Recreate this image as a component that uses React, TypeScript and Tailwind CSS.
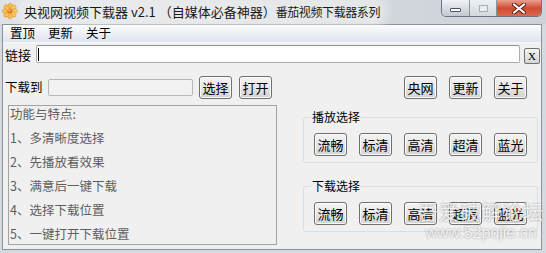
import type { ReactNode } from 'react'

function Flower() {
  const petals = [0, 45, 90, 135, 180, 225, 270, 315]
  return (
    <svg width="16" height="16" viewBox="0 0 16 16">
      {petals.map((a) => (
        <ellipse
          key={a}
          cx="8"
          cy="3.6"
          rx="2.2"
          ry="3.4"
          transform={`rotate(${a} 8 8)`}
          fill="#f6c54a"
          stroke="#d98a2e"
          strokeWidth="0.6"
        />
      ))}
      <circle cx="8" cy="8" r="2.6" fill="#e7782c" />
      <circle cx="7.4" cy="7.3" r="0.9" fill="#ffd9a0" />
    </svg>
  )
}

function Btn({ children }: { children: ReactNode }) {
  return (
    <div className="flex h-[23px] w-[33px] shrink-0 items-center justify-center rounded-[3px] border border-[#707070] bg-gradient-to-b from-[#f4f4f4] via-[#e6e6e6] to-[#d2d2d2] text-[13px] leading-none shadow-[inset_0_0_0_1px_#fbfbfb]">
      {children}
    </div>
  )
}

function Group({ title, className }: { title: string; className: string }) {
  return (
    <fieldset className={`rounded-[3px] border border-[#d5dfe5] px-[10px] pb-[6px] pt-[9px] ${className}`}>
      <legend className="-ml-[3px] px-[1px] text-[12px] leading-[14px]">{title}</legend>
      <div className="flex gap-[12px]">
        <Btn>流畅</Btn>
        <Btn>标清</Btn>
        <Btn>高清</Btn>
        <Btn>超清</Btn>
        <Btn>蓝光</Btn>
      </div>
    </fieldset>
  )
}

const features = ['1、多清晰度选择', '2、先播放看效果', '3、满意后一键下载', '4、选择下载位置', '5、一键打开下载位置']

export default function App() {
  return (
    <div className="relative h-[253px] w-[546px] overflow-hidden bg-[#d5dae0] font-['Noto_Sans_CJK_SC',sans-serif] text-black">
      {/* title bar */}
      <div className="flex h-[24px] items-start bg-gradient-to-r from-[#dfe3e8] to-[#cdd2d8]">
        <div className="ml-[2px] mt-[3px] h-[16px] w-[16px]">
          <Flower />
        </div>
        <div className="ml-[6px] mt-[2px] whitespace-pre rounded-[6px] bg-[#eeeeee]/70 text-[13px] leading-[19px] text-[#1a1a1a] shadow-[0_0_10px_6px_rgba(240,240,240,0.7)]">
          <span>央视网视频下载器 v2.1 （自媒体必备神器）</span>
          <span className="text-[12px] tracking-[-0.4px]">番茄视频下载器系列</span>
        </div>
        <div className="ml-auto mr-[4px] flex h-[17px] overflow-hidden rounded-b-[5px] border border-t-0 border-[#6b7482]">
          <div className="flex w-[28px] items-center justify-center border-r border-[#8a929e] bg-gradient-to-b from-[#f0f2f5] to-[#c3c9d2]">
            <div className="mt-[3px] h-[4px] w-[11px] rounded-[1px] border border-[#4b5360] bg-white" />
          </div>
          <div className="flex w-[27px] items-center justify-center border-r border-[#8a929e] bg-gradient-to-b from-[#eef0f3] to-[#d3d8de]">
            <div className="h-[7px] w-[9px] border border-[#a6adb7] bg-[#e9ecef]" />
          </div>
          <div className="flex w-[44px] items-center justify-center bg-gradient-to-b from-[#e9a08e] via-[#cf4b33] to-[#d96a4f]">
            <svg width="14" height="11" viewBox="0 0 14 11">
              <path d="M2 1.5 L12 9.5 M12 1.5 L2 9.5" stroke="#5a1c12" strokeWidth="4" strokeLinecap="round" />
              <path d="M2 1.5 L12 9.5 M12 1.5 L2 9.5" stroke="#ffffff" strokeWidth="2.2" strokeLinecap="round" />
            </svg>
          </div>
        </div>
      </div>

      {/* client area */}
      <div className="ml-[2px] flex h-[226px] w-[540px] flex-col border border-[#8b929b] bg-[#f0f0f0]">
        {/* menu bar */}
        <div className="flex h-[18px] items-center gap-[13px] border-b border-[#f5f7fa] bg-gradient-to-b from-[#fbfcfd] to-[#dde4ee] pl-[7px] text-[12.5px] leading-none">
          <span>置顶</span>
          <span>更新</span>
          <span>关于</span>
        </div>

        {/* link row */}
        <div className="mt-[2px] flex h-[18px] items-center">
          <span className="w-[33px] pl-[2px] text-[13px] leading-none">链接</span>
          <div className="flex h-[18px] w-[484px] items-center rounded-[2px] border border-[#abadb3] border-t-[#8e9196] bg-white pl-[1px]">
            <div className="h-[13px] w-[1px] bg-black" />
          </div>
          <div className="ml-[4px] mt-[4px] flex h-[16px] w-[16px] items-center justify-center rounded-[2px] border border-[#707070] bg-gradient-to-b from-[#f4f4f4] to-[#d6d6d6] font-['Liberation_Serif',serif] text-[11px] leading-none">
            X
          </div>
        </div>

        {/* main */}
        <div className="mt-[13px] flex">
          <div className="w-[277px]">
            <div className="flex h-[23px] items-center">
              <span className="w-[45px] pl-[2px] text-[12.5px] leading-none">下载到</span>
              <div className="h-[17px] w-[145px] rounded-[2px] border border-[#b8b8b8] bg-[#f2f2f2]" />
              <div className="ml-[6px]">
                <Btn>选择</Btn>
              </div>
              <div className="ml-[7px]">
                <Btn>打开</Btn>
              </div>
            </div>
            <div className="ml-[5px] mt-[6px] h-[140px] w-[269px] border border-[#a3a3a3] pl-[1px] text-[12.5px] leading-[16px] text-[#5e5e5e]">
              <div className="h-[24px]">功能与特点:</div>
              {features.map((f) => (
                <div key={f} className="h-[24px]">
                  {f}
                </div>
              ))}
            </div>
          </div>

          <div className="ml-[23px] w-[235px]">
            <div className="flex h-[23px] justify-end gap-[12px] pr-[11px]">
              <Btn>央网</Btn>
              <Btn>更新</Btn>
              <Btn>关于</Btn>
            </div>
            <Group title="播放选择" className="mt-[11px]" />
            <Group title="下载选择" className="mt-[16px]" />
          </div>
        </div>
      </div>

      {/* watermark */}
      <div className="pointer-events-none absolute left-[418px] top-[200px] flex flex-col items-center text-white/85 [text-shadow:0_0_2px_rgba(0,0,0,0.45)]">
        <span className="text-[20px] leading-[24px] tracking-[1px]">吾爱破解论坛</span>
        <span className="font-['Liberation_Sans',sans-serif] text-[16px] leading-[18px]">www.52pojie.cn</span>
      </div>
    </div>
  )
}
